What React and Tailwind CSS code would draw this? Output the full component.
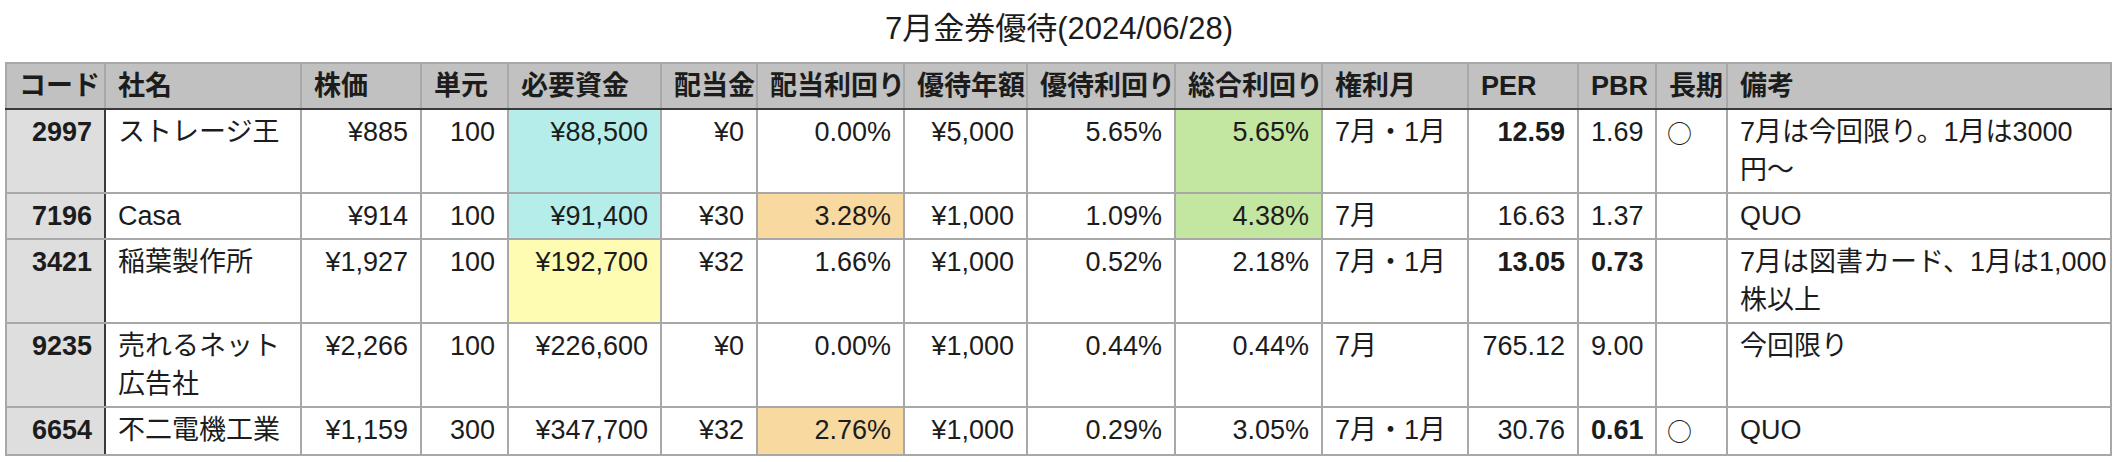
import React from "react";

const cols = [
    { label: "コード", w: "w-[99px]" },
    { label: "社名", w: "w-[196px]" },
    { label: "株価", w: "w-[120px]" },
    { label: "単元", w: "w-[87px]" },
    { label: "必要資金", w: "w-[153px]" },
    { label: "配当金", w: "w-[96px]" },
    { label: "配当利回り", w: "w-[147px]" },
    { label: "優待年額", w: "w-[123px]" },
    { label: "優待利回り", w: "w-[148px]" },
    { label: "総合利回り", w: "w-[147px]" },
    { label: "権利月", w: "w-[146px]" },
    { label: "PER", w: "w-[110px]" },
    { label: "PBR", w: "w-[78px]" },
    { label: "長期", w: "w-[71px]" },
    { label: "備考", w: "w-[384px]" },
];

const CYAN = "bg-[#b4ede9]";
const YELLOW = "bg-[#fefcb2]";
const ORANGE = "bg-[#f8d99f]";
const GREEN = "bg-[#c3e6a0]";

const rows = [
    {
        code: "2997", name: ["ストレージ王"], price: "¥885", unit: "100",
        need: "¥88,500", needBg: CYAN, div: "¥0", divYield: "0.00%", divBg: "",
        yutai: "¥5,000", yutaiYield: "5.65%", total: "5.65%", totalBg: GREEN,
        month: "7月・1月", per: "12.59", perBold: true, pbr: "1.69", pbrBold: false,
        long: true, note: ["7月は今回限り。1月は3000", "円〜"],
    },
    {
        code: "7196", name: ["Casa"], price: "¥914", unit: "100",
        need: "¥91,400", needBg: CYAN, div: "¥30", divYield: "3.28%", divBg: ORANGE,
        yutai: "¥1,000", yutaiYield: "1.09%", total: "4.38%", totalBg: GREEN,
        month: "7月", per: "16.63", perBold: false, pbr: "1.37", pbrBold: false,
        long: false, note: ["QUO"],
    },
    {
        code: "3421", name: ["稲葉製作所"], price: "¥1,927", unit: "100",
        need: "¥192,700", needBg: YELLOW, div: "¥32", divYield: "1.66%", divBg: "",
        yutai: "¥1,000", yutaiYield: "0.52%", total: "2.18%", totalBg: "",
        month: "7月・1月", per: "13.05", perBold: true, pbr: "0.73", pbrBold: true,
        long: false, note: ["7月は図書カード、1月は1,000", "株以上"],
    },
    {
        code: "9235", name: ["売れるネット", "広告社"], price: "¥2,266", unit: "100",
        need: "¥226,600", needBg: "", div: "¥0", divYield: "0.00%", divBg: "",
        yutai: "¥1,000", yutaiYield: "0.44%", total: "0.44%", totalBg: "",
        month: "7月", per: "765.12", perBold: false, pbr: "9.00", pbrBold: false,
        long: false, note: ["今回限り"],
    },
    {
        code: "6654", name: ["不二電機工業"], price: "¥1,159", unit: "300",
        need: "¥347,700", needBg: "", div: "¥32", divYield: "2.76%", divBg: ORANGE,
        yutai: "¥1,000", yutaiYield: "0.29%", total: "3.05%", totalBg: "",
        month: "7月・1月", per: "30.76", perBold: false, pbr: "0.61", pbrBold: true,
        long: true, note: ["QUO"],
    },
];

const cell = "border-2 border-[#a8a8a8] align-top px-[12px] pt-[3px] pb-[3px] whitespace-nowrap";

const Lines = ({ lines }) =>
    lines.map((l, i) => (
        <React.Fragment key={i}>
            {i > 0 && <br />}
            {l}
        </React.Fragment>
    ));

const App = () => {
    return (
        <div className="w-[2118px] h-[462px] bg-white text-[#1c1c1c] font-['Liberation_Sans','Noto_Sans_CJK_JP',sans-serif]">
            <div className="h-[62px] flex items-end justify-center pb-[14px] text-[31px] leading-[38px]">
                7月金券優待(2024/06/28)
            </div>

            <table className="ml-[5px] w-[2105px] table-fixed border-collapse text-[27px] leading-[38px]">
                <colgroup>
                    {cols.map((c) => (
                        <col key={c.label} className={c.w} />
                    ))}
                </colgroup>
                <thead>
                    <tr className="bg-[#c0c1c0]">
                        {cols.map((c) => (
                            <th
                                key={c.label}
                                className={`${cell} border-b-[#3a3a3a] text-left font-bold`}
                            >
                                {c.label}
                            </th>
                        ))}
                    </tr>
                </thead>
                <tbody>
                    {rows.map((r) => (
                        <tr key={r.code}>
                            <td className={`${cell} border-r-[#3a3a3a] bg-[#dedede] text-right font-bold`}>{r.code}</td>
                            <td className={`${cell} text-left`}><Lines lines={r.name} /></td>
                            <td className={`${cell} text-right`}>{r.price}</td>
                            <td className={`${cell} text-right`}>{r.unit}</td>
                            <td className={`${cell} text-right ${r.needBg}`}>{r.need}</td>
                            <td className={`${cell} text-right`}>{r.div}</td>
                            <td className={`${cell} text-right ${r.divBg}`}>{r.divYield}</td>
                            <td className={`${cell} text-right`}>{r.yutai}</td>
                            <td className={`${cell} text-right`}>{r.yutaiYield}</td>
                            <td className={`${cell} text-right ${r.totalBg}`}>{r.total}</td>
                            <td className={`${cell} text-left`}>{r.month}</td>
                            <td className={`${cell} text-right ${r.perBold ? "font-bold" : ""}`}>{r.per}</td>
                            <td className={`${cell} text-right ${r.pbrBold ? "font-bold" : ""}`}>{r.pbr}</td>
                            <td className={`${cell} text-left pl-[10px]`}>
                                {r.long && <span className="text-[25px] font-['Noto_Sans_CJK_JP',sans-serif]">○</span>}
                            </td>
                            <td className={`${cell} text-left`}><Lines lines={r.note} /></td>
                        </tr>
                    ))}
                </tbody>
            </table>
        </div>
    );
};

export default App;
